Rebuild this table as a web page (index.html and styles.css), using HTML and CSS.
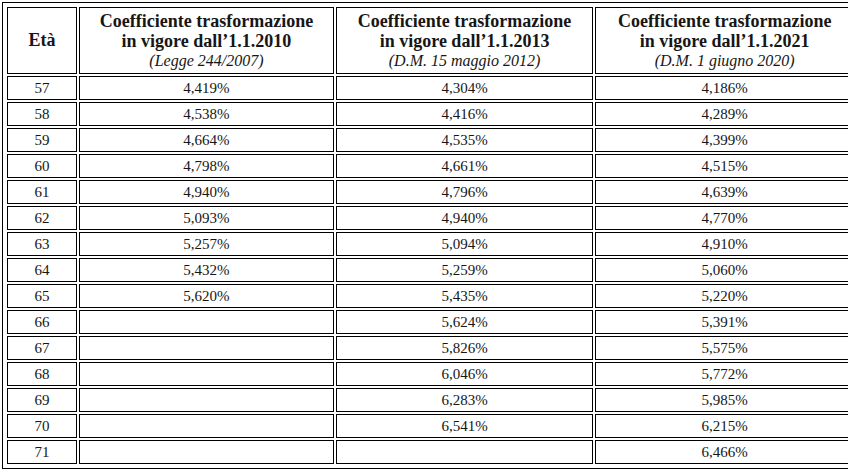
FILE: index.html
```html
<!DOCTYPE html>
<html lang="it">
<head>
<meta charset="utf-8">
<link rel="stylesheet" href="styles.css">
</head>
<body>
<table class="coef">
<colgroup>
<col class="c-age"><col class="c-a"><col class="c-b"><col class="c-c">
</colgroup>
<thead>
<tr>
<th class="h-age">Età</th>
<th><span class="t">Coefficiente trasformazione</span><span class="t">in vigore dall’1.1.2010</span><span class="s">(Legge 244/2007)</span></th>
<th><span class="t">Coefficiente trasformazione</span><span class="t">in vigore dall’1.1.2013</span><span class="s">(D.M. 15 maggio 2012)</span></th>
<th><span class="t">Coefficiente trasformazione</span><span class="t">in vigore dall’1.1.2021</span><span class="s">(D.M. 1 giugno 2020)</span></th>
</tr>
</thead>
<tbody>
<tr><td>57</td><td>4,419%</td><td>4,304%</td><td>4,186%</td></tr>
<tr><td>58</td><td>4,538%</td><td>4,416%</td><td>4,289%</td></tr>
<tr><td>59</td><td>4,664%</td><td>4,535%</td><td>4,399%</td></tr>
<tr><td>60</td><td>4,798%</td><td>4,661%</td><td>4,515%</td></tr>
<tr><td>61</td><td>4,940%</td><td>4,796%</td><td>4,639%</td></tr>
<tr><td>62</td><td>5,093%</td><td>4,940%</td><td>4,770%</td></tr>
<tr><td>63</td><td>5,257%</td><td>5,094%</td><td>4,910%</td></tr>
<tr><td>64</td><td>5,432%</td><td>5,259%</td><td>5,060%</td></tr>
<tr><td>65</td><td>5,620%</td><td>5,435%</td><td>5,220%</td></tr>
<tr><td>66</td><td></td><td>5,624%</td><td>5,391%</td></tr>
<tr><td>67</td><td></td><td>5,826%</td><td>5,575%</td></tr>
<tr><td>68</td><td></td><td>6,046%</td><td>5,772%</td></tr>
<tr><td>69</td><td></td><td>6,283%</td><td>5,985%</td></tr>
<tr><td>70</td><td></td><td>6,541%</td><td>6,215%</td></tr>
<tr><td>71</td><td></td><td></td><td>6,466%</td></tr>
</tbody>
</table>
</body>
</html>
```
FILE: styles.css
```css
html, body {
  margin: 0;
  padding: 0;
  overflow: hidden;
  background: #fff;
}
body {
  padding: 2px 0 0 2px;
  font-family: "Liberation Serif", "Times New Roman", serif;
  color: #161616;
}
.coef {
  border: 1px solid #000;
  padding: 2px;
  border-collapse: separate;
  border-spacing: 2px;
  table-layout: fixed;
  width: 857px;
}
.c-age { width: 70px; }
.c-a { width: 254px; }
.c-b { width: 257px; }
.c-c { width: 258px; }
.coef th, .coef td {
  border: 1px solid #000;
  box-sizing: border-box;
  text-align: center;
  padding: 0;
}
.coef th {
  height: 67px;
  vertical-align: middle;
  font-weight: bold;
  font-size: 18px;
}
.coef th .t {
  display: block;
  line-height: 20px;
}
.coef th .s {
  display: block;
  font-style: italic;
  font-weight: normal;
  font-size: 16px;
  line-height: 20px;
}
.coef td {
  height: 24px;
  font-size: 15px;
  line-height: 22px;
  vertical-align: middle;
}
```
